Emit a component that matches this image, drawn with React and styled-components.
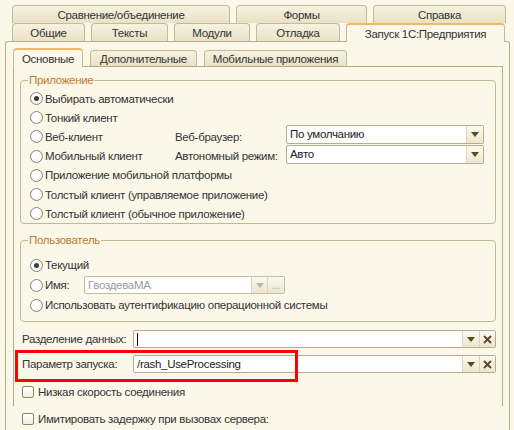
import styled, { createGlobalStyle } from "styled-components";

const GlobalStyle = createGlobalStyle`
  html, body {
    margin: 0;
    background: #fbf8e9;
  }
  body {
    font-family: "Liberation Sans", Arial, sans-serif;
    font-size: 11.5px;
    letter-spacing: -0.3px;
    color: #333;
  }
`;

const Page = styled.div`
  width: 514px;
  height: 430px;
  overflow: hidden;
  box-sizing: border-box;
  padding: 5px 0 0 5px;
`;

const TabRows = styled.div`
  padding-left: 7px;
`;

const TabRow = styled.div`
  display: flex;
  align-items: flex-end;
  gap: 6px;
  height: 18px;
`;

const Tab = styled.div`
  box-sizing: border-box;
  width: ${(p) => p.$w}px;
  height: ${(p) => (p.$active ? 19 : 18)}px;
  margin-bottom: ${(p) => (p.$active ? -1 : 0)}px;
  position: relative;
  z-index: ${(p) => (p.$active ? 2 : 1)};
  display: flex;
  align-items: center;
  justify-content: center;
  border: 1px solid #c4ba97;
  border-bottom: none;
  border-top: ${(p) => (p.$active ? "2px solid #f2b867" : "1px solid #c4ba97")};
  border-radius: 4px 4px 0 0;
  background: ${(p) =>
    p.$active ? "#fbf8e9" : "linear-gradient(#f6f2df, #e9e2c6)"};
  white-space: nowrap;
`;

const Panel = styled.div`
  box-sizing: border-box;
  width: 505px;
  height: 389px;
  border: 1px solid #b5ab89;
  border-bottom: none;
  border-radius: 3px 3px 0 0;
  padding: 6px 6px 0 7px;
`;

const InnerTabRow = styled.div`
  display: flex;
  align-items: flex-end;
  gap: 7px;
  height: 18px;
`;

const InnerTab = styled.div`
  box-sizing: border-box;
  width: ${(p) => p.$w}px;
  height: ${(p) => (p.$active ? 19 : 16)}px;
  margin-bottom: ${(p) => (p.$active ? -1 : 0)}px;
  position: relative;
  z-index: ${(p) => (p.$active ? 2 : 1)};
  display: flex;
  align-items: center;
  justify-content: center;
  border: 1px solid #c4ba97;
  border-bottom: none;
  border-top: ${(p) => (p.$active ? "2px solid #f2b867" : "1px solid #c4ba97")};
  border-radius: 4px 4px 0 0;
  background: ${(p) =>
    p.$active ? "#fbf8e9" : "linear-gradient(#f6f2df, #e9e2c6)"};
  white-space: nowrap;
`;

const InnerPanel = styled.div`
  box-sizing: border-box;
  height: 340px;
  border: 1px solid #b5ab89;
  border-bottom: none;
  padding: 6px 6px 0 6px;
`;

const Group = styled.fieldset`
  margin: ${(p) => p.$mt || 0}px 0 0;
  border: 1px solid #c3b992;
  border-radius: 4px;
  padding: ${(p) => p.$pt}px 9px ${(p) => p.$pb}px 9px;
  min-width: 0;
`;

const Legend = styled.legend`
  color: #c07a2e;
  padding: 0 1px;
  margin-left: -2px;
  line-height: 14px;
`;

const AppGrid = styled.div`
  display: grid;
  grid-template-columns: 145px 111px 198px;
  grid-auto-rows: 19.2px;
  align-items: center;
`;

const UserRows = styled.div`
  display: grid;
  grid-auto-rows: 20px;
  align-items: center;
`;

const RadioItem = styled.div`
  display: flex;
  align-items: center;
  gap: 2px;
  white-space: nowrap;
  grid-column: ${(p) => (p.$span ? "1 / -1" : "auto")};
`;

const RadioCircle = styled.span`
  box-sizing: border-box;
  width: 13px;
  height: 13px;
  flex: none;
  border-radius: 50%;
  border: 1px solid #858585;
  background: radial-gradient(circle at 40% 35%, #ffffff 30%, #ebe8dc 100%);
  display: flex;
  align-items: center;
  justify-content: center;

  &::after {
    content: "";
    display: ${(p) => (p.$checked ? "block" : "none")};
    width: 5px;
    height: 5px;
    border-radius: 50%;
    background: #3a3a3a;
  }
`;

const SideLabel = styled.span`
  white-space: nowrap;
`;

const Select = styled.div`
  box-sizing: border-box;
  height: 19px;
  margin-bottom: 4px;
  display: flex;
  border: 1px solid #b8ad86;
  border-radius: 2px;
  background: #fff;
`;

const ValueText = styled.span`
  flex: 1;
  padding-left: 3px;
  line-height: 17px;
  white-space: nowrap;
  overflow: hidden;
  color: ${(p) => (p.$disabled ? "#9c9c9c" : "#222")};
  display: flex;
  align-items: center;
`;

const Caret = styled.span`
  width: 1px;
  height: 13px;
  background: #111;
`;

const SideBtn = styled.span`
  width: ${(p) => p.$w || 16}px;
  flex: none;
  border-left: 1px solid #ddd5bb;
  background: linear-gradient(#fbf9f1, #ece6d0);
  display: flex;
  align-items: center;
  justify-content: center;
  color: ${(p) => (p.$disabled ? "#a8a8a8" : "#5a4a1f")};
  font-size: 11px;
  line-height: 1;
`;

const UserName = styled.span`
  width: 37px;
  flex: none;
`;

const Combo = styled.div`
  box-sizing: border-box;
  width: 201px;
  height: 18px;
  display: flex;
  border: 1px solid #c8bf9e;
  border-radius: 2px;
  background: #fff;
`;

const FieldRow = styled.div`
  position: relative;
  display: flex;
  align-items: center;
  height: 18px;
  margin-top: ${(p) => p.$mt}px;
`;

const FieldLabel = styled.span`
  box-sizing: border-box;
  width: 113px;
  padding-left: 2px;
  white-space: nowrap;
`;

const Field = styled.div`
  box-sizing: border-box;
  width: 363px;
  height: 18px;
  display: flex;
  border: 1px solid #b8ad86;
  border-radius: 2px;
  background: #fff;
`;

const Highlight = styled.div`
  position: absolute;
  left: -5px;
  top: -5px;
  width: 283px;
  height: 32px;
  box-sizing: border-box;
  border: 3px solid #ff0000;
  pointer-events: none;
`;

const CheckRow = styled.div`
  display: flex;
  align-items: center;
  gap: 4px;
  height: 20px;
  padding-left: 2px;
  margin-top: ${(p) => p.$mt}px;
  white-space: nowrap;
`;

const CheckBox = styled.span`
  box-sizing: border-box;
  width: 12px;
  height: 12px;
  border: 1px solid #8c866f;
  border-radius: 2px;
  background: linear-gradient(#ffffff, #f1eee2);
`;

function Arrow({ color = "#5a4a1f" }) {
  return (
    <svg width="8" height="5" viewBox="0 0 8 5">
      <path d="M0 0 H8 L4 5 Z" fill={color} />
    </svg>
  );
}

function Cross() {
  return (
    <svg width="9" height="9" viewBox="0 0 9 9">
      <path d="M1 1 L8 8 M8 1 L1 8" stroke="#5a4a1f" strokeWidth="1.8" />
    </svg>
  );
}

const Radio = ({ checked, span, children }) => (
  <RadioItem $span={span}>
    <RadioCircle $checked={checked} />
    {children}
  </RadioItem>
);

export default function App() {
  return (
    <Page>
      <GlobalStyle />
      <TabRows>
        <TabRow>
          <Tab $w={218}>Сравнение/объединение</Tab>
          <Tab $w={131}>Формы</Tab>
          <Tab $w={133}>Справка</Tab>
        </TabRow>
        <TabRow>
          <Tab $w={73}>Общие</Tab>
          <Tab $w={77}>Тексты</Tab>
          <Tab $w={76}>Модули</Tab>
          <Tab $w={84}>Отладка</Tab>
          <Tab $w={159} $active>
            Запуск 1С:Предприятия
          </Tab>
        </TabRow>
      </TabRows>

      <Panel>
        <InnerTabRow>
          <InnerTab $w={70} $active>
            Основные
          </InnerTab>
          <InnerTab $w={107}>Дополнительные</InnerTab>
          <InnerTab $w={143}>Мобильные приложения</InnerTab>
        </InnerTabRow>

        <InnerPanel>
          <Group $pt={2} $pb={0}>
            <Legend>Приложение</Legend>
            <AppGrid>
              <Radio checked span>Выбирать автоматически</Radio>
              <Radio span>Тонкий клиент</Radio>
              <Radio>Веб-клиент</Radio>
              <SideLabel>Веб-браузер:</SideLabel>
              <Select>
                <ValueText>По умолчанию</ValueText>
                <SideBtn>
                  <Arrow />
                </SideBtn>
              </Select>
              <Radio>Мобильный клиент</Radio>
              <SideLabel>Автономный режим:</SideLabel>
              <Select>
                <ValueText>Авто</ValueText>
                <SideBtn>
                  <Arrow />
                </SideBtn>
              </Select>
              <Radio span>Приложение мобильной платформы</Radio>
              <Radio span>Толстый клиент (управляемое приложение)</Radio>
              <Radio span>Толстый клиент (обычное приложение)</Radio>
            </AppGrid>
          </Group>

          <Group $mt={9} $pt={8} $pb={6}>
            <Legend>Пользователь</Legend>
            <UserRows>
              <Radio checked>Текущий</Radio>
              <Radio>
                <UserName>Имя:</UserName>
                <Combo>
                  <ValueText $disabled>ГвоздеваМА</ValueText>
                  <SideBtn $w={15}>
                    <Arrow color="#b5b5b5" />
                  </SideBtn>
                  <SideBtn $w={16} $disabled>
                    ...
                  </SideBtn>
                </Combo>
              </Radio>
              <Radio>Использовать аутентификацию операционной системы</Radio>
            </UserRows>
          </Group>

          <FieldRow $mt={8}>
            <FieldLabel>Разделение данных:</FieldLabel>
            <Field>
              <ValueText>
                <Caret />
              </ValueText>
              <SideBtn>
                <Arrow />
              </SideBtn>
              <SideBtn $w={15}>
                <Cross />
              </SideBtn>
            </Field>
          </FieldRow>

          <FieldRow $mt={7}>
            <FieldLabel>Параметр запуска:</FieldLabel>
            <Field>
              <ValueText>/rash_UseProcessing</ValueText>
              <SideBtn>
                <Arrow />
              </SideBtn>
              <SideBtn $w={15}>
                <Cross />
              </SideBtn>
            </Field>
            <Highlight />
          </FieldRow>

          <CheckRow $mt={9}>
            <CheckBox />
            Низкая скорость соединения
          </CheckRow>
          <CheckRow $mt={7}>
            <CheckBox />
            Имитировать задержку при вызовах сервера:
          </CheckRow>
        </InnerPanel>
      </Panel>
    </Page>
  );
}
